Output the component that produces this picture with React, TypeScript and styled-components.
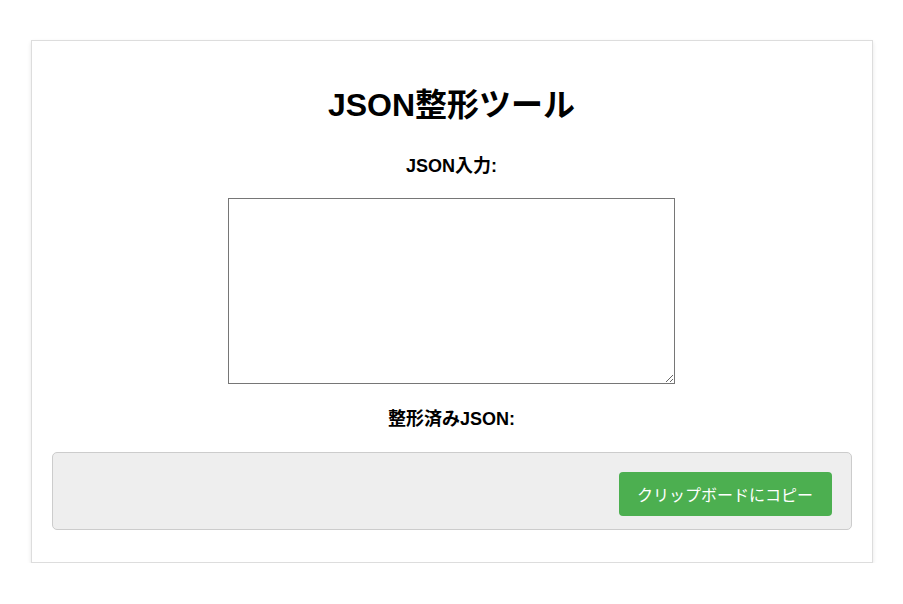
import { useState } from "react";
import styled, { createGlobalStyle } from "styled-components";

const GlobalStyle = createGlobalStyle`
  body {
    margin: 0;
    background: #ffffff;
    font-family: "Liberation Sans", Arial, "Noto Sans CJK JP", sans-serif;
    color: #000;
  }
`;

const Card = styled.div`
  width: 800px;
  margin: 40px auto 0;
  padding: 20px;
  border: 1px solid #ddd;
  background: #fff;
  box-shadow: 0 2px 4px rgba(0, 0, 0, 0.1);
  display: flex;
  flex-direction: column;
  align-items: center;
`;

const Title = styled.h1`
  margin: 24px 0 0;
  font-size: 32px;
  line-height: 40px;
  font-weight: 700;
`;

const Label = styled.label<{ gap: number }>`
  display: block;
  margin-top: ${(props) => props.gap}px;
  font-size: 18px;
  line-height: 20px;
  font-weight: 700;
`;

const Input = styled.textarea`
  box-sizing: border-box;
  width: 447px;
  height: 186px;
  margin-top: 22px;
  border: 1px solid #767676;
  border-radius: 0;
  padding: 2px;
  font-family: "Liberation Mono", monospace;
  font-size: 13px;
`;

const Output = styled.div`
  box-sizing: border-box;
  align-self: stretch;
  margin: 23px 0 12px;
  min-height: 78px;
  padding: 19px 19px 13px;
  border: 1px solid #ccc;
  border-radius: 5px;
  background: #eee;
  display: flex;
  flex-direction: column;
  align-items: flex-end;
`;

const Formatted = styled.pre`
  align-self: stretch;
  margin: 0;
  font-family: "Liberation Mono", monospace;
  font-size: 13px;
  white-space: pre-wrap;
  &:empty {
    display: none;
  }
`;

const CopyButton = styled.button`
  width: 213px;
  height: 44px;
  border: none;
  border-radius: 4px;
  background: #4caf50;
  color: #fff;
  font-family: "Noto Sans CJK JP", sans-serif;
  font-size: 16px;
  cursor: pointer;
`;

export default function App() {
  const [raw, setRaw] = useState("");

  let formatted = "";
  if (raw.trim()) {
    try {
      formatted = JSON.stringify(JSON.parse(raw), null, 2);
    } catch {
      formatted = "無効なJSONです";
    }
  }

  return (
    <>
      <GlobalStyle />
      <Card>
        <Title>JSON整形ツール</Title>
        <Label gap={31} htmlFor="json-input">
          JSON入力:
        </Label>
        <Input
          id="json-input"
          value={raw}
          onChange={(e) => setRaw(e.target.value)}
        />
        <Label gap={25}>整形済みJSON:</Label>
        <Output>
          <Formatted>{formatted}</Formatted>
          <CopyButton onClick={() => navigator.clipboard?.writeText(formatted)}>
            クリップボードにコピー
          </CopyButton>
        </Output>
      </Card>
    </>
  );
}
